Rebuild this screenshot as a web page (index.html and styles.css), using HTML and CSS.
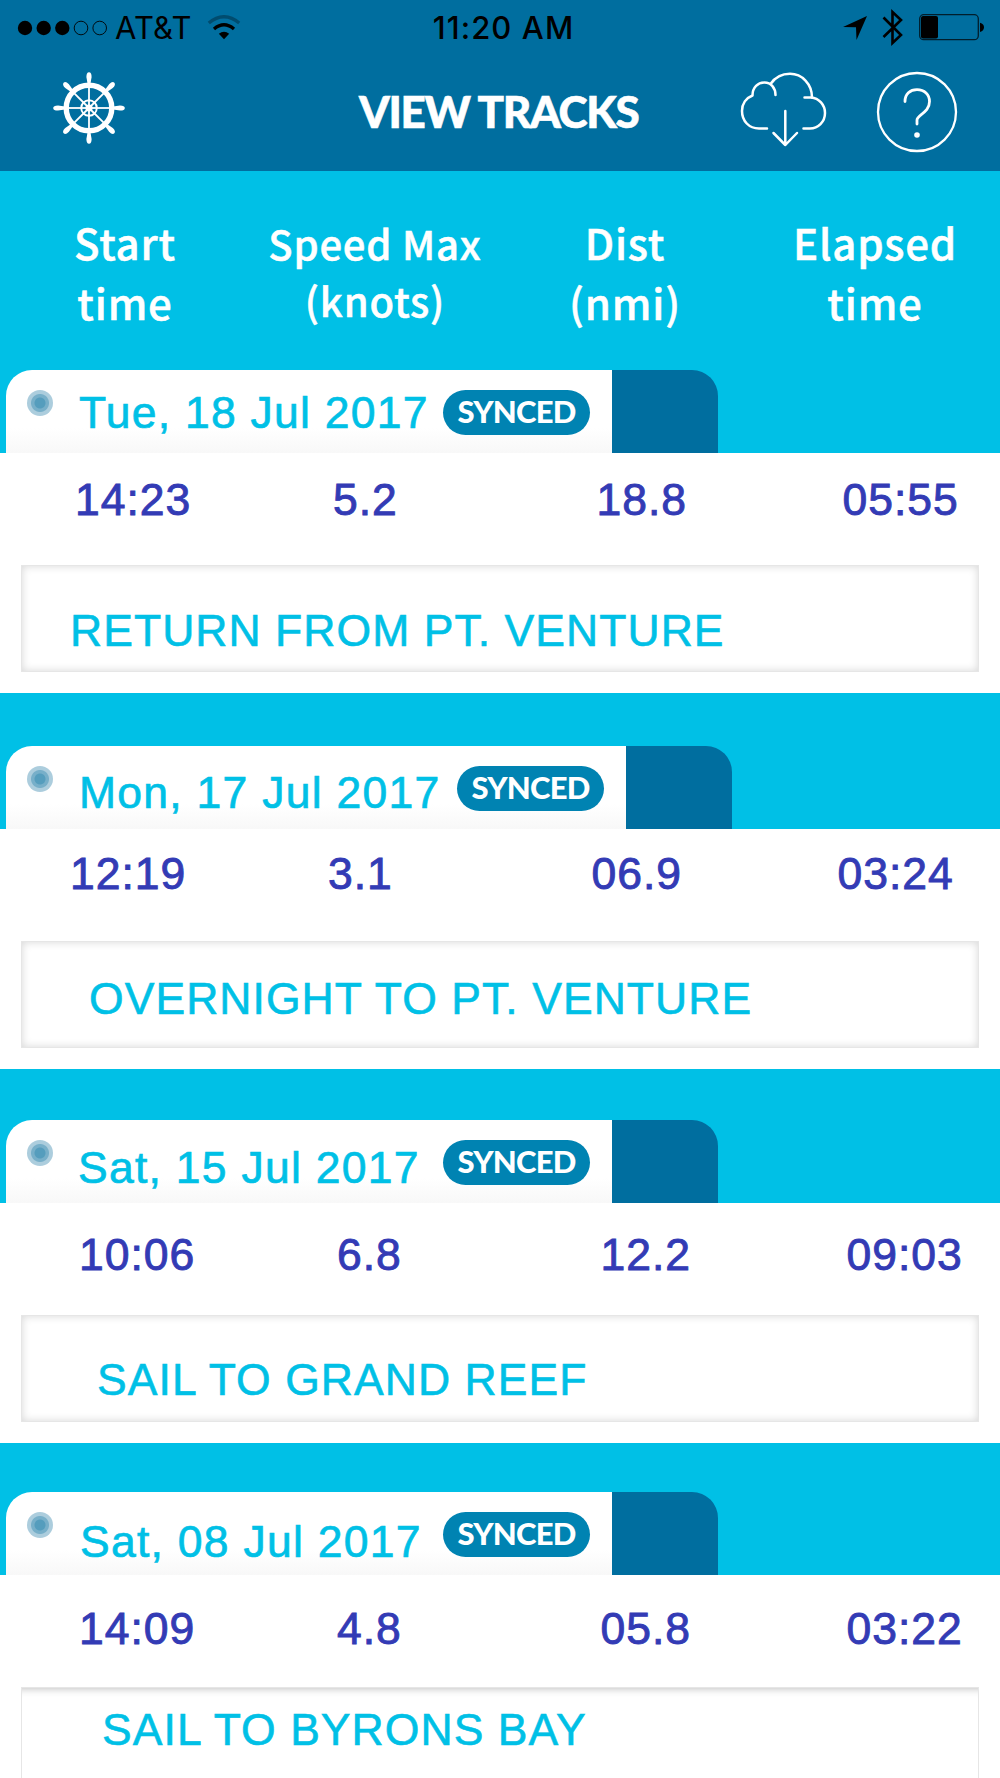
FILE: index.html
```html
<!DOCTYPE html>
<html lang="en">
<head>
  <meta charset="UTF-8">
  <title>View Tracks</title>
  <link rel="stylesheet" href="styles.css">
</head>
<body>

<header class="header">
  <div class="status-bar">
    <div class="status-left">
      <svg class="signal" width="92" height="16" viewBox="0 0 92 16">
        <circle cx="8" cy="8" r="7.2"/>
        <circle cx="26.7" cy="8" r="7.2"/>
        <circle cx="45.3" cy="8" r="7.2"/>
        <circle cx="64" cy="8" r="6.8" fill="none" stroke="#000" stroke-width="0.9"/>
        <circle cx="82.7" cy="8" r="6.8" fill="none" stroke="#000" stroke-width="0.9"/>
      </svg>
      <span class="carrier">AT&amp;T</span>
      <svg class="wifi" width="34" height="25" viewBox="0 0 34 25">
        <path d="M1.8 8 Q17 -4.5 32.2 8" fill="none" stroke="#004c6f" stroke-width="3.4"/>
        <path d="M7 14 Q17 5.6 27 14" fill="none" stroke="#000" stroke-width="3.4"/>
        <path d="M11.8 18.8 Q17 14.8 22.2 18.8 L17 24.2 Z"/>
      </svg>
    </div>
    <span class="clock">11:20 AM</span>
    <div class="status-right">
      <svg width="24" height="24" viewBox="0 0 24 24"><path d="M24 0 L13.5 24 L13 11.3 L0 11 Z"/></svg>
      <svg class="bluetooth" width="22" height="37" viewBox="0 0 22 37">
        <path d="M1.5 8.5 L19 26 L10.5 34 V3 L19 11 L1.5 28" fill="none" stroke="#000" stroke-width="2.6"/>
      </svg>
      <svg class="battery" width="66" height="27" viewBox="0 0 66 27">
        <rect x="0.7" y="0.7" width="58.6" height="25" rx="4" fill="none" stroke="#001e2c" stroke-width="1.3"/>
        <rect x="2" y="2" width="17" height="22.5" rx="2"/>
        <path d="M61 8.8 Q65 10 65 13.3 Q65 16.8 61 18 Z"/>
      </svg>
    </div>
  </div>

  <div class="title-bar">
    <svg class="wheel" width="72" height="72" viewBox="-36 -36 72 72">
      <defs>
        <g id="spoke">
          <path d="M0 0 V-25" stroke="#fff" stroke-width="1.8"/>
          <path d="M-1.4 -24 L-2.6 -31 Q-2.6 -35.8 0 -35.8 Q2.6 -35.8 2.6 -31 L1.4 -24 Z" fill="#fff"/>
        </g>
      </defs>
      <circle r="22.8" fill="none" stroke="#fff" stroke-width="5.4"/>
      <circle r="7.8" fill="none" stroke="#fff" stroke-width="1.9"/>
      <circle r="3.6" fill="#fff"/>
      <use href="#spoke"/>
      <use href="#spoke" transform="rotate(45)"/>
      <use href="#spoke" transform="rotate(90)"/>
      <use href="#spoke" transform="rotate(135)"/>
      <use href="#spoke" transform="rotate(180)"/>
      <use href="#spoke" transform="rotate(225)"/>
      <use href="#spoke" transform="rotate(270)"/>
      <use href="#spoke" transform="rotate(315)"/>
    </svg>
    <h1 class="title">VIEW TRACKS</h1>
    <svg class="cloud" width="88" height="76" viewBox="0 0 88 76">
      <g fill="none" stroke="#fff" stroke-width="2.5" stroke-linecap="round" stroke-linejoin="round">
        <path d="M27 56.5 H19 C9 56.5 2 49 2 39 C2 32 6 26 12.5 23.5 C12.5 15 18 10.5 24.5 10.5 C31 10.5 35.5 16 35.5 23"/>
        <path d="M30.5 12 C35 5.5 42 1.8 50 1.8 C62 1.8 72 12 72 25.5"/>
        <path d="M64.5 25.5 H71 C79 26 85 33 85 41 C85 50 78 56.5 70 56.5 H63.5"/>
        <path d="M45.3 39 V73 M33.5 61 L45.3 73 L57 61"/>
      </g>
    </svg>
    <svg class="help" width="82" height="82" viewBox="-41 -41 82 82">
      <g fill="none" stroke="#fff" stroke-width="2.3" stroke-linecap="round">
        <circle r="39"/>
        <path stroke-width="2.8" d="M-12 -10.5 C-12 -18 -7 -22.3 0 -22.3 C7.5 -22.3 12.5 -17.5 12.5 -10.5 C12.5 1 0 2.5 0 8 V12"/>
      </g>
      <circle cx="0" cy="23" r="2.8" fill="#fff"/>
    </svg>
  </div>
</header>

<div class="columns">
  <div class="col">Start<br>time</div>
  <div class="col col-speed">Speed Max<br>(knots)</div>
  <div class="col">Dist<br>(nmi)</div>
  <div class="col">Elapsed<br>time</div>
</div>

<section class="track track-1">
  <div class="tab">
    <div class="tab-main">
      <span class="dot"></span>
      <span class="date">Tue, 18 Jul 2017</span>
      <span class="badge">SYNCED</span>
    </div>
    <div class="tab-end"></div>
  </div>
  <div class="details">
    <div class="values"><span>14:23</span><span>5.2</span><span>18.8</span><span>05:55</span></div>
    <div class="note">RETURN FROM PT. VENTURE</div>
  </div>
</section>

<section class="track track-2">
  <div class="tab">
    <div class="tab-main">
      <span class="dot"></span>
      <span class="date">Mon, 17 Jul 2017</span>
      <span class="badge">SYNCED</span>
    </div>
    <div class="tab-end"></div>
  </div>
  <div class="details">
    <div class="values"><span>12:19</span><span>3.1</span><span>06.9</span><span>03:24</span></div>
    <div class="note">OVERNIGHT TO PT. VENTURE</div>
  </div>
</section>

<section class="track track-3">
  <div class="tab">
    <div class="tab-main">
      <span class="dot"></span>
      <span class="date">Sat, 15 Jul 2017</span>
      <span class="badge">SYNCED</span>
    </div>
    <div class="tab-end"></div>
  </div>
  <div class="details">
    <div class="values"><span>10:06</span><span>6.8</span><span>12.2</span><span>09:03</span></div>
    <div class="note">SAIL TO GRAND REEF</div>
  </div>
</section>

<section class="track track-4">
  <div class="tab">
    <div class="tab-main">
      <span class="dot"></span>
      <span class="date">Sat, 08 Jul 2017</span>
      <span class="badge">SYNCED</span>
    </div>
    <div class="tab-end"></div>
  </div>
  <div class="details">
    <div class="values"><span>14:09</span><span>4.8</span><span>05.8</span><span>03:22</span></div>
    <div class="note">SAIL TO BYRONS BAY</div>
  </div>
</section>

</body>
</html>
```
FILE: styles.css
```css
* {
  box-sizing: border-box;
}
body {
  margin: 0;
  background-color: #00c0e6;
  font-family: "Liberation Sans", Arial, sans-serif;
}
svg {
  display: block;
  flex: none;
}

/* header */
.header {
  height: 171px;
  background-color: #006e9f;
}
.status-bar {
  display: grid;
  grid-template-columns: 1fr auto 1fr;
  align-items: center;
  height: 54px;
  padding: 0 15px 0 17px;
  font-family: Inter, sans-serif;
  font-size: 31px;
  line-height: 54px;
  color: #000;
}
.status-left,
.status-right {
  display: flex;
  align-items: center;
}
.status-right {
  justify-content: flex-end;
}
.carrier {
  margin: 1px 0 0 6px;
  font-weight: 400;
  letter-spacing: 0.2px;
}
.wifi {
  margin-left: 15px;
}
.clock {
  padding-left: 5px;
  font-weight: 500;
  letter-spacing: 1.1px;
}
.bluetooth {
  margin-left: 15px;
}
.battery {
  margin-left: 15px;
}
.title-bar {
  display: flex;
  align-items: flex-start;
  padding-left: 53px;
}
.wheel {
  margin-top: 18px;
}
.title {
  width: 284px;
  margin: 31px 0 0 234px;
  font-family: Lato, sans-serif;
  font-size: 44px;
  font-weight: 900;
  line-height: 52px;
  letter-spacing: -1.3px;
  color: #fff;
  white-space: nowrap;
  -webkit-text-stroke: 0.6px #fff;
}
.cloud {
  margin: 18px 0 0 97px;
}
.help {
  margin: 17px 0 0 48px;
}

/* column titles */
.columns {
  display: grid;
  grid-template-columns: repeat(4, 1fr);
  height: 199px;
  padding-top: 41px;
  color: #fff;
  font-family: "Noto Sans CJK SC", sans-serif;
  font-size: 42px;
  font-weight: 500;
  line-height: 60px;
  letter-spacing: 0.8px;
  text-align: center;
  -webkit-text-stroke: 0.5px #fff;
}
.col-speed {
  padding-top: 3px;
  font-size: 40px;
  line-height: 57px;
}

/* tracks */
.track {
  margin-bottom: 53px;
}
.tab {
  display: flex;
  height: 83px;
  padding-left: 6px;
}
.tab-main {
  display: flex;
  align-items: flex-start;
  width: 606px;
  padding-right: 22px;
  border-radius: 26px 0 0 0;
  background: linear-gradient(#fff 70%, #f8f8f8);
}
.tab-end {
  width: 106px;
  border-radius: 0 26px 0 0;
  background-color: #006e9f;
}
.dot {
  width: 26px;
  height: 26px;
  margin: 20px 0 0 21px;
  border-radius: 50%;
  background: radial-gradient(circle, #559dbd 0 5px, #77afc9 6px 8.5px, #accddd 9.5px);
}
.date {
  flex: 1;
  padding: 20px 0 0 26px;
  color: #00c0e6;
  font-size: 44.5px;
  line-height: 45px;
  letter-spacing: 1.25px;
  white-space: nowrap;
  -webkit-text-stroke: 0.7px #00c0e6;
}
.badge {
  width: 147px;
  height: 45px;
  margin-top: 20px;
  border-radius: 23px;
  background-color: #0083b2;
  color: #fff;
  font-family: Lato, sans-serif;
  font-size: 31px;
  font-weight: 900;
  line-height: 43px;
  letter-spacing: -0.8px;
  text-align: center;
}
.details {
  height: 240px;
  background-color: #fff;
}
.values {
  display: grid;
  grid-template-columns: 258px 263.5px 246px auto;
  height: 112px;
  padding: 24px 0 0 75px;
  color: #333bb5;
  font-size: 44.5px;
  line-height: 45px;
  letter-spacing: 1px;
  -webkit-text-stroke: 0.9px #333bb5;
}
.note {
  height: 107px;
  margin: 0 21px;
  padding: 42px 0 0 48px;
  border: 1px solid #e6e6e6;
  box-shadow: inset 0 0 9px rgba(0,0,0,0.16);
  color: #00c0e6;
  font-size: 44.5px;
  line-height: 45px;
  letter-spacing: 1.05px;
  white-space: nowrap;
  -webkit-text-stroke: 0.6px #00c0e6;
}

/* each track sits a little differently */
.track-2 {
  margin-bottom: 51px;
}
.track-2 .tab-main {
  width: 620px;
}
.track-2 .date {
  padding-top: 24px;
}
.track-2 .values {
  padding: 22px 0 0 70px;
}
.track-2 .note {
  padding: 34px 0 0 67px;
}
.track-3 {
  margin-bottom: 49px;
}
.track-3 .date {
  padding: 25px 0 0 25px;
}
.track-3 .values {
  padding: 29px 0 0 79px;
}
.track-3 .note {
  padding: 41px 0 0 75px;
}
.track-4 {
  margin-bottom: 0;
}
.track-4 .date {
  padding: 27px 0 0 27px;
}
.track-4 .details {
  height: 203px;
}
.track-4 .values {
  padding: 31px 0 0 79px;
}
/* runs off the bottom of the screen */
.track-4 .note {
  height: 91px;
  padding: 19px 0 0 80px;
  border-bottom: none;
  box-shadow: inset 0 9px 9px -9px rgba(0,0,0,0.3);
}
```
